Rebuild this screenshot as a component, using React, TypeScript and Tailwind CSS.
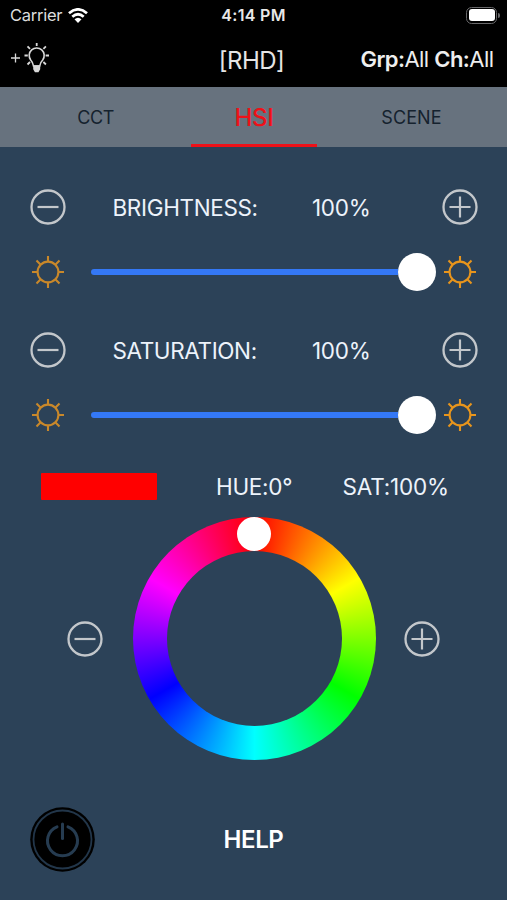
import type { ReactNode } from "react";

function CircleButton({ plus = false }: { plus?: boolean }) {
  return (
    <button aria-label={plus ? "Increase" : "Decrease"} className="size-9 shrink-0">
      <svg viewBox="0 0 36 36" className="size-9" fill="none" stroke="#c3c7cb" strokeWidth="2.3">
        <circle cx="18" cy="18" r="16.5" />
        <path d={plus ? "M7.5 18H28.5M18 7.5V28.5" : "M7.5 18H28.5"} strokeWidth="2.2" />
      </svg>
    </button>
  );
}

function Sun({ dim = false }: { dim?: boolean }) {
  return (
    <svg viewBox="0 0 32 32" className="size-8 shrink-0" fill="none" stroke={dim ? "#c9882a" : "#e8951c"} strokeWidth="2.1">
      <circle cx="16" cy="16" r="10.4" />
      <path d="M16 0V5.5M16 26.5V32M0 16H5.5M26.5 16H32M4.5 4.5L8.7 8.7M23.3 23.3L27.5 27.5M27.5 4.5L23.3 8.7M4.5 27.5L8.7 23.3" />
    </svg>
  );
}

function Control({ label }: { label: ReactNode }) {
  return (
    <section>
      <div className="flex h-9 items-center pl-[30px] pr-[29px]">
        <CircleButton />
        <div className="w-[200px] shrink-0 pl-[46.5px] pt-[1.5px]">{label}</div>
        <div className="ml-[46px] w-[130px] shrink-0 pt-[1.5px] tracking-[-0.3px]">100%</div>
        <CircleButton plus />
      </div>
      <div className="mt-7 flex h-[38px] items-center pl-8">
        <Sun dim />
        <div className="ml-[27px] flex w-[345px] items-center">
          <div className="h-[5.5px] flex-1 rounded-l-full bg-[#3478f6]" />
          <div className="size-[38px] rounded-full bg-white" />
        </div>
        <div className="ml-2">
          <Sun />
        </div>
      </div>
    </section>
  );
}

export default function App() {
  return (
    <div className="h-[900px] w-[507px] overflow-hidden bg-[#2c4258] font-[Inter,sans-serif] text-[22.5px] leading-none whitespace-nowrap text-[#edf3fb]">
      <header className="h-[87px] bg-black">
        <div className="grid h-[30px] grid-cols-3 items-center">
          <div className="flex items-center gap-[6px] pl-[10px] text-[16.5px] text-[#dddddd]">
            <span className="tracking-[-0.25px]">Carrier</span>
            <svg viewBox="0 0 20 15" className="h-[15px] w-5" fill="none" stroke="#fff" strokeWidth="2.8">
              <path d="M1 5.2Q10 -2.4 19 5.2M4.3 8.7Q10 3.8 15.7 8.7" />
              <path d="M6.5 11.3Q10 8.3 13.5 11.3L10 15Z" fill="#fff" stroke="none" />
            </svg>
          </div>
          <div className="text-center text-[16px] font-semibold tracking-[0.3px] text-[#e8e8e8]">4:14 PM</div>
          <div className="flex items-center justify-end pr-[7px]">
            <div className="h-[17px] w-[31px] rounded-[5.5px] border-[1.5px] border-[#68686a] p-[1.5px]">
              <div className="size-full rounded-[3px] bg-white" />
            </div>
            <div className="ml-px h-[5px] w-[2px] rounded-r-full bg-[#68686a]" />
          </div>
        </div>
        <div className="grid h-[57px] grid-cols-3 items-center">
          <div className="flex h-[57px] pl-[10px] pt-[12px]">
            <svg viewBox="0 0 42 32" className="h-8 w-[42px]" fill="none" stroke="#d9d9d9" strokeWidth="1.6">
              <path d="M1 16H10M5.5 11.5V20.5" strokeWidth="1.3" />
              <path d="M23.5 24Q23 20.5 20.7 18A7.5 7.5 0 1 1 32.7 18Q30.2 20.5 29.7 24Z" />
              <path d="M24 24H29.4V27L28 29.5H25.4L24 27Z" fill="#d9d9d9" />
              <path d="M26.7 1V4M14.5 13.5H17.8M35.6 13.5H39M17.5 4.3L20 6.8M33.4 6.8L35.9 4.3M17.5 22.5L20 20M33.4 20L35.9 22.5" strokeWidth="1.8" />
            </svg>
          </div>
          <div className="pt-[5px] pr-[4px] text-center text-[24px] tracking-[-0.5px] text-[#e5e5e5]">[RHD]</div>
          <div className="pr-[13.5px] text-right text-[22px] tracking-[-0.55px] text-[#eeeeee]">
            <b className="font-semibold">Grp:</b>All <b className="font-semibold">Ch:</b>All
          </div>
        </div>
      </header>
      <nav className="flex h-[60px] bg-[#67727e] text-[18px] text-[#15222e]">
        <div className="flex w-[191px] items-center justify-center pt-px tracking-[-0.4px]">CCT</div>
        <div className="flex w-[126px] flex-col">
          <div className="flex h-[57px] items-center justify-center pt-[5px] text-[24px] font-medium tracking-[-0.3px] text-[#ee1118]">HSI</div>
          <div className="h-[2.5px] bg-[#ee1118]" />
        </div>
        <div className="flex w-[189px] items-center justify-center pt-px tracking-[0.1px]">SCENE</div>
      </nav>
      <main className="pt-[42px]">
        <Control label={<span className="tracking-[-0.35px]">BRIGHTNESS:</span>} />
        <div className="h-[41px]" />
        <Control label={<span className="tracking-[-0.4px]">SATURATION:</span>} />
        <div className="mt-[39px] flex h-[27px] items-center pl-[41px]">
          <div className="h-[27px] w-[115.5px] rounded-[1px] bg-[#ff0000]" />
          <div className="ml-[59.5px] w-[126.5px] pt-px tracking-[-0.3px]">HUE:0°</div>
          <div className="pt-px tracking-[-0.2px]">SAT:100%</div>
        </div>
        <div className="mt-[17px] flex h-[243px] items-center pl-[67px]">
          <CircleButton />
          <div className="relative ml-[29.5px] mr-[28.5px] flex size-[243px] items-center justify-center rounded-full bg-[conic-gradient(#f00,#ff0,#0f0,#0ff,#00f,#f0f,#f00)]">
            <div className="size-[175px] rounded-full bg-[#2c4258]" />
            <div className="absolute top-0 left-[104.5px] size-[34px] rounded-full bg-white" />
          </div>
          <CircleButton plus />
        </div>
        <div className="mt-[47px] grid h-[65px] grid-cols-3 items-center">
          <button aria-label="Power" className="ml-[29.5px] size-[65px]">
            <svg viewBox="0 0 65 65" className="size-[65px]" fill="none">
              <circle cx="32.5" cy="32.5" r="32.3" fill="#000" />
              <circle cx="32.5" cy="32.5" r="29" stroke="#22364a" strokeWidth="1.8" />
              <g stroke="#263c51" strokeWidth="3" strokeLinecap="round">
                <path d="M27 19.8A15 15 0 1 0 38 19.8" />
                <path d="M32.5 17V31.5" />
              </g>
            </svg>
          </button>
          <div className="pt-px text-center text-[24px] font-semibold tracking-[-0.4px] text-white">HELP</div>
        </div>
      </main>
    </div>
  );
}
